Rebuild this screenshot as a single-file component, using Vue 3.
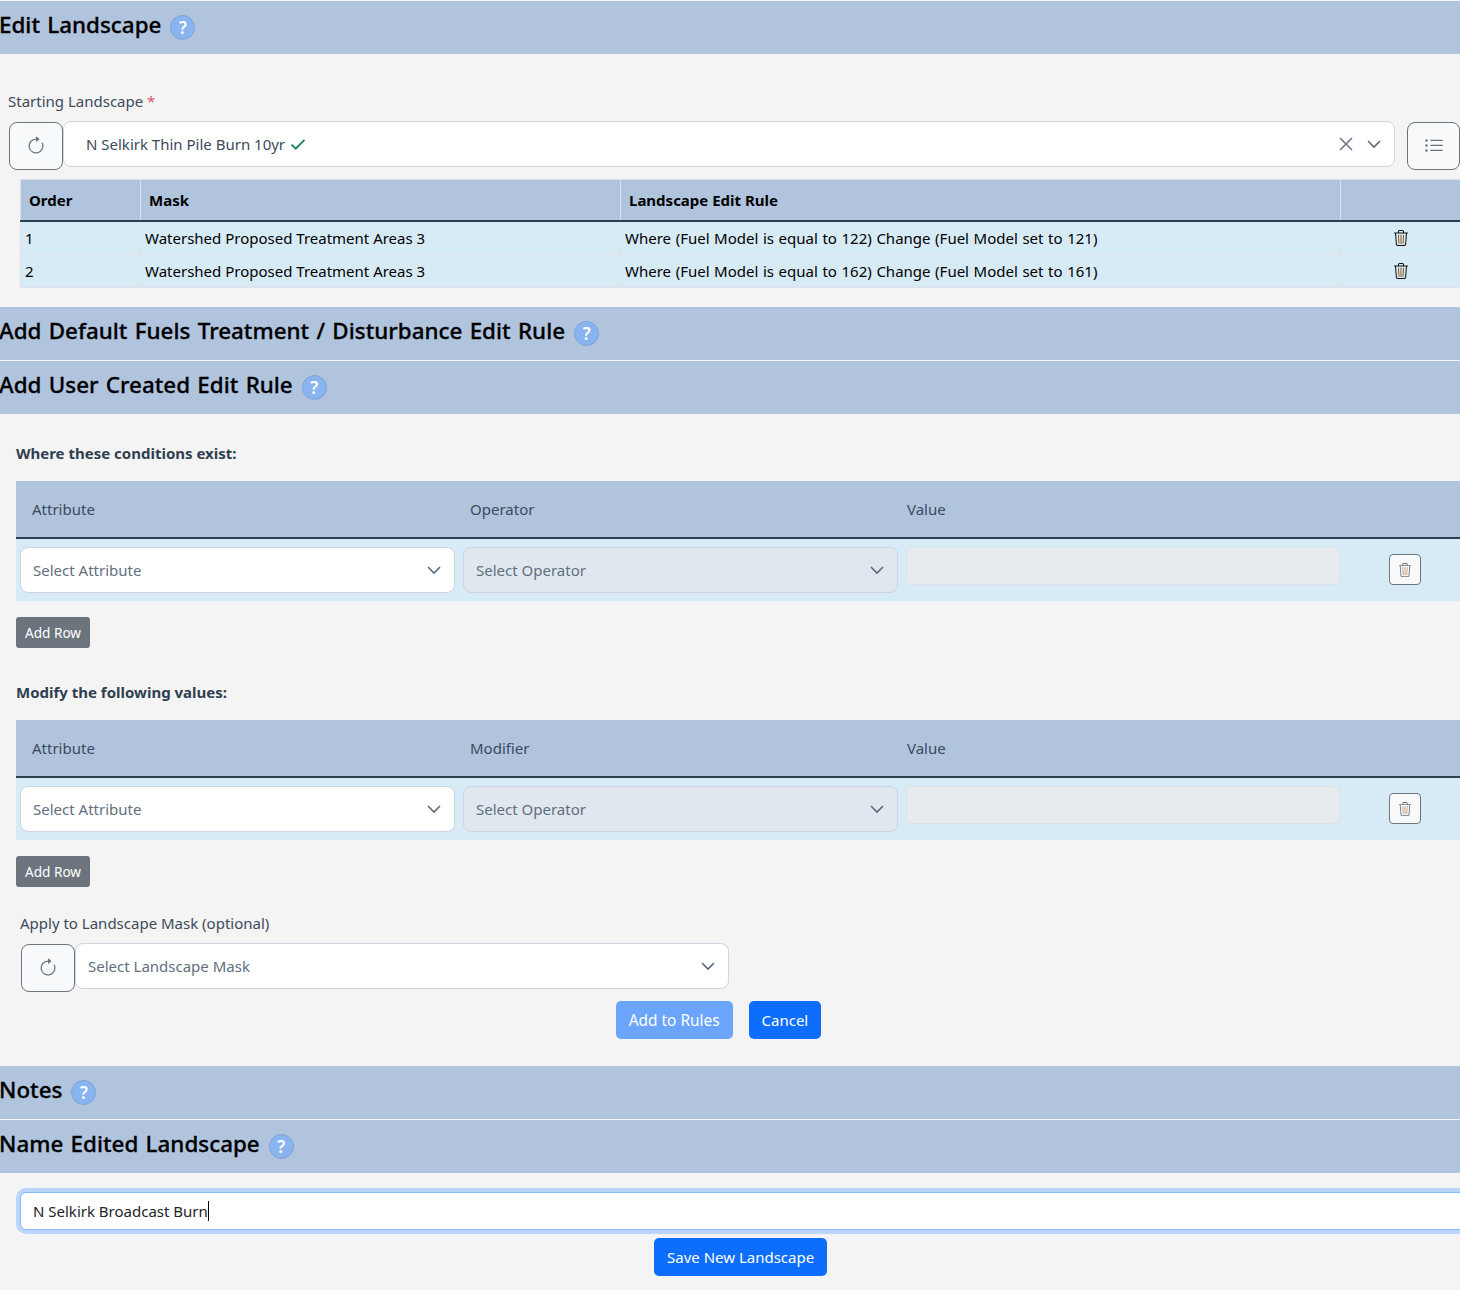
<template>
  <div class="page">
    <!-- Edit Landscape -->
    <div class="section-bar first">
      <h2>Edit Landscape</h2><span class="help">?</span>
    </div>

    <div class="start-block">
      <div class="field-label">Starting Landscape <span class="req">*</span></div>
      <div class="start-row">
        <button class="icon-btn" type="button">
          <svg viewBox="0 0 16 16" width="20" height="20" fill="currentColor"><path fill-rule="evenodd" d="M8 3a5 5 0 1 0 4.546 2.914.5.5 0 0 1 .908-.417A6 6 0 1 1 8 2v1z"/><path d="M8 4.466V.534a.25.25 0 0 1 .41-.192l2.36 1.966c.12.1.12.284 0 .384L8.41 4.658A.25.25 0 0 1 8 4.466z"/></svg>
        </button>
        <div class="select start-select">
          <span class="select-value">N Selkirk Thin Pile Burn 10yr</span>
          <svg class="check" viewBox="0 0 16 16" width="16" height="16"><path d="M1.5 8.6l4.2 4L14.5 3.8" fill="none" stroke="currentColor" stroke-width="1.9"/></svg>
          <svg class="clear" viewBox="0 0 16 16" width="16" height="16"><path d="M2 2l12 12M14 2L2 14" stroke="currentColor" stroke-width="1.6" fill="none"/></svg>
          <svg class="chevron" viewBox="0 0 16 16" width="16" height="16"><path d="M2 5l6 6 6-6" stroke="currentColor" stroke-width="1.6" fill="none"/></svg>
        </div>
        <button class="icon-btn list-btn" type="button">
          <svg viewBox="0 0 16 16" width="20" height="20" fill="currentColor"><path fill-rule="evenodd" d="M5 11.5a.5.5 0 0 1 .5-.5h9a.5.5 0 0 1 0 1h-9a.5.5 0 0 1-.5-.5zm0-4a.5.5 0 0 1 .5-.5h9a.5.5 0 0 1 0 1h-9a.5.5 0 0 1-.5-.5zm0-4a.5.5 0 0 1 .5-.5h9a.5.5 0 0 1 0 1h-9a.5.5 0 0 1-.5-.5zm-3 1a1 1 0 1 0 0-2 1 1 0 0 0 0 2zm0 4a1 1 0 1 0 0-2 1 1 0 0 0 0 2zm0 4a1 1 0 1 0 0-2 1 1 0 0 0 0 2z"/></svg>
        </button>
      </div>
    </div>

    <table class="rules">
      <colgroup>
        <col style="width: 120px" />
        <col style="width: 480px" />
        <col style="width: 720px" />
        <col style="width: 140px" />
      </colgroup>
      <thead>
        <tr>
          <th>Order</th>
          <th>Mask</th>
          <th>Landscape Edit Rule</th>
          <th></th>
        </tr>
      </thead>
      <tbody>
        <tr v-for="rule in rules" :key="rule.order">
          <td>{{ rule.order }}</td>
          <td>{{ rule.mask }}</td>
          <td class="rule-text">{{ rule.text }}</td>
          <td class="trash-cell">
            <svg class="trash" viewBox="0 0 16 16" width="16" height="16">
              <path fill="#111" d="M6.5 1h3a.5.5 0 0 1 .5.5v1H6v-1a.5.5 0 0 1 .5-.5ZM11 2.5v-1A1.5 1.5 0 0 0 9.5 0h-3A1.5 1.5 0 0 0 5 1.5v1H2.506a.58.58 0 0 0-.01 0H1.5a.5.5 0 0 0 0 1h.538l.853 10.66A2 2 0 0 0 4.885 16h6.23a2 2 0 0 0 1.994-1.84l.853-10.66h.538a.5.5 0 0 0 0-1h-.995a.59.59 0 0 0-.01 0H11Zm1.958 1-.846 10.58a1 1 0 0 1-.997.92h-6.23a1 1 0 0 1-.997-.92L3.042 3.5h9.916Z"/>
              <path fill="#8a5a22" d="M5.471 4.5a.5.5 0 0 1 .528.47l.5 8.5a.5.5 0 0 1-.998.06L5 5.03a.5.5 0 0 1 .47-.53Zm5.058 0a.5.5 0 0 1 .47.53l-.5 8.5a.5.5 0 1 1-.998-.06l.5-8.5a.5.5 0 0 1 .528-.47ZM8 4.5a.5.5 0 0 1 .5.5v8.5a.5.5 0 0 1-1 0V5a.5.5 0 0 1 .5-.5Z"/>
            </svg>
          </td>
        </tr>
      </tbody>
    </table>

    <div class="section-bar default-bar">
      <h2>Add Default Fuels Treatment / Disturbance Edit Rule</h2><span class="help">?</span>
    </div>
    <div class="section-bar">
      <h2>Add User Created Edit Rule</h2><span class="help">?</span>
    </div>

    <div class="rule-form">
      <div v-for="block in blocks" :key="block.title" class="cond-block">
        <div class="cond-title">{{ block.title }}</div>
        <div class="cond-table">
          <div class="cond-head">
            <span>Attribute</span>
            <span>{{ block.middle }}</span>
            <span>Value</span>
          </div>
          <div class="cond-row">
            <div class="select cond-select">
              <span class="placeholder">Select Attribute</span>
              <svg class="chevron" viewBox="0 0 16 16" width="16" height="16"><path d="M2 5l6 6 6-6" stroke="currentColor" stroke-width="1.6" fill="none"/></svg>
            </div>
            <div class="select cond-select disabled">
              <span class="placeholder">Select Operator</span>
              <svg class="chevron" viewBox="0 0 16 16" width="16" height="16"><path d="M2 5l6 6 6-6" stroke="currentColor" stroke-width="1.6" fill="none"/></svg>
            </div>
            <div class="value-input"></div>
            <button class="row-trash" type="button">
              <svg viewBox="0 0 16 16" width="14" height="14">
                <path fill="#6c757d" d="M6.5 1h3a.5.5 0 0 1 .5.5v1H6v-1a.5.5 0 0 1 .5-.5ZM11 2.5v-1A1.5 1.5 0 0 0 9.5 0h-3A1.5 1.5 0 0 0 5 1.5v1H2.506a.58.58 0 0 0-.01 0H1.5a.5.5 0 0 0 0 1h.538l.853 10.66A2 2 0 0 0 4.885 16h6.23a2 2 0 0 0 1.994-1.84l.853-10.66h.538a.5.5 0 0 0 0-1h-.995a.59.59 0 0 0-.01 0H11Zm1.958 1-.846 10.58a1 1 0 0 1-.997.92h-6.23a1 1 0 0 1-.997-.92L3.042 3.5h9.916Z"/>
                <path fill="#c49a78" d="M5.471 4.5a.5.5 0 0 1 .528.47l.5 8.5a.5.5 0 0 1-.998.06L5 5.03a.5.5 0 0 1 .47-.53Zm5.058 0a.5.5 0 0 1 .47.53l-.5 8.5a.5.5 0 1 1-.998-.06l.5-8.5a.5.5 0 0 1 .528-.47ZM8 4.5a.5.5 0 0 1 .5.5v8.5a.5.5 0 0 1-1 0V5a.5.5 0 0 1 .5-.5Z"/>
              </svg>
            </button>
          </div>
        </div>
        <button class="add-row" type="button">Add Row</button>
      </div>

      <div class="mask-block">
        <div class="field-label">Apply to Landscape Mask (optional)</div>
        <div class="mask-row">
          <button class="icon-btn" type="button">
            <svg viewBox="0 0 16 16" width="20" height="20" fill="currentColor"><path fill-rule="evenodd" d="M8 3a5 5 0 1 0 4.546 2.914.5.5 0 0 1 .908-.417A6 6 0 1 1 8 2v1z"/><path d="M8 4.466V.534a.25.25 0 0 1 .41-.192l2.36 1.966c.12.1.12.284 0 .384L8.41 4.658A.25.25 0 0 1 8 4.466z"/></svg>
          </button>
          <div class="select mask-select">
            <span class="placeholder">Select Landscape Mask</span>
            <svg class="chevron" viewBox="0 0 16 16" width="16" height="16"><path d="M2 5l6 6 6-6" stroke="currentColor" stroke-width="1.6" fill="none"/></svg>
          </div>
        </div>
      </div>

      <div class="form-actions">
        <button class="btn-primary faded" type="button">Add to Rules</button>
        <button class="btn-primary" type="button">Cancel</button>
      </div>
    </div>

    <div class="section-bar">
      <h2>Notes</h2><span class="help">?</span>
    </div>
    <div class="section-bar">
      <h2>Name Edited Landscape</h2><span class="help">?</span>
    </div>

    <div class="name-block">
      <div class="name-input">N Selkirk Broadcast Burn<span class="caret"></span></div>
      <button class="btn-primary save" type="button">Save New Landscape</button>
    </div>
  </div>
</template>

<script setup>
const rules = [
  {
    order: 1,
    mask: 'Watershed Proposed Treatment Areas 3',
    text: 'Where (Fuel Model is equal to 122) Change (Fuel Model set to 121)',
  },
  {
    order: 2,
    mask: 'Watershed Proposed Treatment Areas 3',
    text: 'Where (Fuel Model is equal to 162) Change (Fuel Model set to 161)',
  },
];

const blocks = [
  { title: 'Where these conditions exist:', middle: 'Operator' },
  { title: 'Modify the following values:', middle: 'Modifier' },
];
</script>

<style>
html,
body {
  margin: 0;
  background: #f4f4f4;
  overflow: hidden;
}
</style>

<style scoped>
.page {
  width: 1460px;
  height: 1290px;
  overflow: hidden;
  background: #f4f4f4;
  color: #212529;
  font-family: "Noto Sans", "Open Sans", sans-serif;
  font-size: 15px;
  line-height: 22px;
}
button {
  font-family: inherit;
}

/* section headers */
.section-bar {
  display: flex;
  align-items: center;
  height: 53px;
  margin-bottom: 1px;
  background: #b0c4de;
}
.section-bar.first {
  margin-top: 1px;
  margin-bottom: 0;
}
.section-bar h2 {
  margin: 0 0 6px -1px;
  font-size: 22.4px;
  font-weight: 500;
  line-height: 30px;
  word-spacing: 1.5px;
  color: #000;
  white-space: nowrap;
  -webkit-text-stroke: 0.3px #000;
}
.help {
  display: flex;
  align-items: center;
  justify-content: center;
  box-sizing: border-box;
  width: 25px;
  height: 25px;
  margin-left: 9px;
  border: 1px solid #7ea3d8;
  border-radius: 50%;
  background: #8ab4ef;
  color: #fff;
  font-size: 17px;
  font-weight: 600;
}

/* starting landscape */
.start-block {
  padding: 36px 0 0 8px;
}
.field-label {
  color: #3c4b5c;
}
.req {
  color: #e0506a;
}
.start-row {
  display: flex;
  align-items: flex-start;
  margin-top: 9px;
  width: 1480px;
}
.icon-btn {
  display: flex;
  align-items: center;
  justify-content: center;
  box-sizing: border-box;
  flex: none;
  width: 54px;
  height: 48px;
  margin-top: 1px;
  padding: 0;
  border: 1px solid #6c757d;
  border-radius: 8px;
  background: #f8f9fa;
  color: #6c757d;
}
.start-row .icon-btn:first-child {
  margin-left: 1px;
}
.list-btn {
  width: 53px;
  margin-left: 12px;
}
.select {
  display: flex;
  align-items: center;
  box-sizing: border-box;
  height: 46px;
  border: 1px solid #ced4e0;
  border-radius: 8px;
  background: #fff;
}
.start-select {
  width: 1332px;
  padding: 0 12px 0 22px;
  color: #3c4b5c;
}
.check {
  margin-left: 5px;
  color: #198754;
}
.clear {
  margin-left: auto;
  color: #6b7a8d;
}
.start-select .chevron {
  margin-left: 12px;
}
.chevron {
  flex: none;
  color: #5a6a7d;
}

/* rule table */
.rules {
  width: 1460px;
  margin: 9px 0 0 20px;
  border-collapse: collapse;
  table-layout: fixed;
  color: #000;
}
.rules th {
  height: 40px;
  padding: 0 8px;
  border: 1px solid #dee2e6;
  border-bottom: 2px solid #2c3e50;
  background: #b0c4de;
  font-weight: 700;
  text-align: left;
}
.rules td {
  height: 32px;
  padding: 0 4px;
  border: 1px solid #dee2e6;
  background: #d7ebf6;
}
.rules .rule-text {
  word-spacing: 0.7px;
}
.rules .trash-cell {
  padding-right: 24px;
  text-align: center;
}
.trash {
  display: block;
  margin: 0 auto;
}

/* user rule form */
.default-bar {
  margin-top: 19px;
}
.rule-form {
  padding-top: 27px;
}
.cond-block {
  padding-left: 16px;
  margin-bottom: 33px;
}
.cond-title {
  color: #2f3f50;
  font-weight: 700;
}
.cond-table {
  margin-top: 17px;
}
.cond-head {
  display: grid;
  grid-template-columns: 438px 437px 1fr;
  align-items: center;
  box-sizing: border-box;
  height: 58px;
  padding-left: 16px;
  border-bottom: 2px solid #2c3e50;
  background: #b0c4de;
  color: #3c4b5c;
}
.cond-row {
  display: flex;
  align-items: flex-start;
  gap: 8px;
  height: 62px;
  padding: 8px 0 0 4px;
  box-sizing: border-box;
  background: #d7ebf6;
}
.cond-select {
  justify-content: space-between;
  width: 435px;
  padding: 0 12px;
}
.cond-select.disabled {
  background: #e1e7ee;
}
.placeholder {
  color: #5f6f80;
}
.value-input {
  box-sizing: border-box;
  width: 434px;
  height: 38px;
  border: 1px solid #dee2e6;
  border-radius: 6px;
  background: #e7ebee;
}
.row-trash {
  display: flex;
  align-items: center;
  justify-content: center;
  box-sizing: border-box;
  width: 32px;
  height: 31px;
  margin: 7px 0 0 41px;
  padding: 0;
  border: 1px solid #6c757d;
  border-radius: 4px;
  background: #f8f9fa;
}
.add-row {
  display: block;
  height: 31px;
  margin-top: 16px;
  padding: 0 9px;
  border: 0;
  border-radius: 3px;
  background: #6c757d;
  color: #fff;
  font-size: 13.6px;
}

/* mask picker */
.mask-block {
  margin-top: -8px;
  padding-left: 20px;
}
.mask-row {
  display: flex;
  align-items: flex-start;
  margin-top: 9px;
}
.mask-row .icon-btn {
  margin-left: 1px;
}
.mask-select {
  justify-content: space-between;
  width: 654px;
  padding: 0 12px;
}
.form-actions {
  display: flex;
  justify-content: center;
  gap: 16px;
  padding: 9px 23px 0 0;
  margin-bottom: 27px;
}
.btn-primary {
  height: 38px;
  padding: 0 13px;
  border: 0;
  border-radius: 5px;
  background: #0d6efd;
  color: #fff;
  font-size: 15px;
}
.btn-primary.faded {
  background: #6aa5fb;
  font-size: 15.4px;
}

/* name input */
.name-block {
  padding: 18px 0 0 20px;
}
.name-input {
  box-sizing: border-box;
  width: 1460px;
  height: 38px;
  padding: 7px 12px;
  border: 1px solid #86b7fe;
  border-radius: 6px;
  background: #fff;
  box-shadow: 0 0 0 4px #bcd5fb;
}
.caret {
  display: inline-block;
  width: 1px;
  height: 20px;
  vertical-align: -4px;
  background: #000;
}
.save {
  display: block;
  margin: 8px 0 0 634px;
}
</style>
